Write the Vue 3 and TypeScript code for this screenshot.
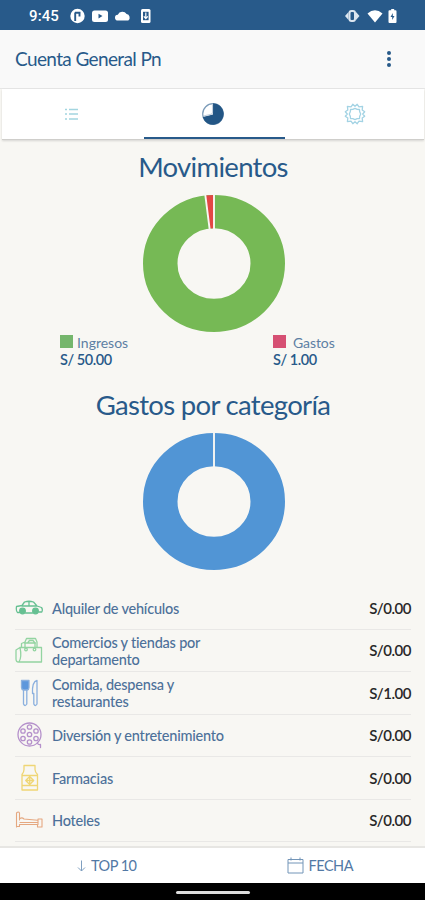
<script setup lang="ts">
interface Category {
  name: string
  amount: string
  icon: string
  color: string
}

const categories: Category[] = [
  { name: 'Alquiler de vehículos', amount: 'S/0.00', icon: 'car', color: '#66c092' },
  { name: 'Comercios y tiendas por departamento', amount: 'S/0.00', icon: 'bag', color: '#93d4a1' },
  { name: 'Comida, despensa y restaurantes', amount: 'S/1.00', icon: 'food', color: '#8bb0de' },
  { name: 'Diversión y entretenimiento', amount: 'S/0.00', icon: 'reel', color: '#b591cb' },
  { name: 'Farmacias', amount: 'S/0.00', icon: 'bottle', color: '#efd675' },
  { name: 'Hoteles', amount: 'S/0.00', icon: 'bed', color: '#e5a880' },
]
</script>

<template>
  <div class="screen">
    <header class="status">
      <span class="clock">9:45</span>
      <svg class="left-icons" viewBox="0 0 84 16" fill="#fff">
        <circle cx="7.500" cy="8" r="7.200" />
        <path d="M5.200 13V4.500M5 4.800h5.500M9.500 4v4.500" stroke="#285a8a" stroke-width="1.900" fill="none" />
        <rect x="22" y="2.500" width="16" height="11.500" rx="2.500" />
        <path d="M28.500 5.800v4.600l4-2.300z" fill="#285a8a" />
        <path d="M48 12.500a2.900 2.900 0 0 1-.2-5.800 5 5 0 0 1 8.800-.6 3.600 3.600 0 0 1 1.700 6.400z" />
        <rect x="71" y="1" width="9.500" height="14" rx="1.500" />
        <path d="M73 3.800h5.600v8.400H73z" fill="#285a8a" />
        <path d="M75.800 4.500v6M73.800 8.300l2 2.200 2-2.200" stroke="#fff" fill="none" stroke-width="1.200" />
      </svg>
      <svg class="right-icons" viewBox="0 0 54 16" fill="#fff">
        <rect x="4.500" y="3" width="5.500" height="10" rx="2" fill="none" stroke="#dce6f0" stroke-width="2" />
        <path d="M3.500 4v8L0 8zM11 4v8l3.500-4z" fill="#dce6f0" />
        <path d="M22.500 5.500q7.500-6.500 15 0L30 14.500z" />
        <path d="M45 2.200h1.200V1h3v1.200h1.300q1 0 1 1V14q0 1-1 1H44.500q-1 0-1-1V3.200q0-1 1-1z" />
        <path d="M47.800 5l-2.300 4h1.700v3l2.300-4h-1.700z" fill="#285a8a" />
      </svg>
    </header>

    <div class="toolbar">
      <h1>Cuenta General Pn</h1>
      <svg class="more" viewBox="0 0 6 18" fill="#285a8a">
        <circle cx="3" cy="3" r="2" /><circle cx="3" cy="9" r="2" /><circle cx="3" cy="15" r="2" />
      </svg>
    </div>

    <nav class="tabs">
      <button class="tab" aria-label="Lista">
        <svg width="16" height="16" viewBox="0 0 16 16" fill="none" stroke="#a3d5e0" stroke-width="1.300">
          <path d="M1 3.500h2M5 3.500h9M1 8h2M5 8h9M1 13h2M5 13h9" />
        </svg>
      </button>
      <button class="tab active" aria-label="Resumen">
        <svg width="24" height="24" viewBox="0 0 24 24">
          <circle cx="12" cy="12" r="10.300" fill="#fff" stroke="#7b9bb8" stroke-width="1.200" />
          <path d="M12 12.500V1.300A10.700 10.700 0 1 1 1.700 15z" fill="#235685" />
          <path d="M11.500 2v8.500q0 1.500-1.500 1.800L2.500 14" stroke="#c3d0dd" stroke-width="1.100" fill="none" />
        </svg>
      </button>
      <button class="tab" aria-label="Ajustes">
        <svg width="22" height="22" viewBox="0 0 22 22" fill="none" stroke="#a3d3e4" stroke-width="1.300" stroke-linejoin="round">
          <path d="M11 3.300 8.800 1.300 7 3.800 3.400 3.400 3.800 7 1.300 8.800 3.300 11 1.300 13.200 3.800 15 3.400 18.600 7 18.200 8.800 20.700 11 18.700 13.200 20.700 15 18.200 18.600 18.600 18.200 15 20.700 13.200 18.700 11 20.700 8.800 18.200 7 18.600 3.400 15 3.800 13.200 1.300z" />
          <path d="M11 5.300 13.200 6.300 15.500 6.500 15.700 8.800 16.700 11 15.700 13.200 15.500 15.500 13.200 15.700 11 16.700 8.800 15.700 6.500 15.500 6.300 13.200 5.300 11 6.300 8.800 6.500 6.500 8.800 6.300z" />
        </svg>
      </button>
    </nav>

    <main>
      <h2 class="moves">Movimientos</h2>
      <svg class="donut" viewBox="0 0 142 142" preserveAspectRatio="none" fill="none">
        <circle cx="71" cy="71" r="53.750" stroke="#76b955" stroke-width="34.500" />
        <circle class="expense" cx="71" cy="71" r="53.750" stroke="#e34744" stroke-width="34.500" pathLength="51" stroke-dasharray="1 50" />
        <path d="M71 0v36M62.300 0l4.400 36" stroke="#f8f7f3" stroke-width="1.900" />
      </svg>
      <div class="legend">
        <div>
          <p class="key"><i class="swatch income" />Ingresos</p>
          <p class="value">S/ 50.00</p>
        </div>
        <div>
          <p class="key wide"><i class="swatch spent" />Gastos</p>
          <p class="value">S/ 1.00</p>
        </div>
      </div>
      <h2 class="by-category">Gastos por categoría</h2>
      <svg class="donut" viewBox="0 0 142 142" preserveAspectRatio="none" fill="none">
        <circle cx="71" cy="71" r="53.750" stroke="#5195d5" stroke-width="34.500" />
        <path d="M71 0v36" stroke="#f8f7f3" stroke-width="1.900" />
      </svg>

      <ul class="list">
        <li v-for="c in categories" :key="c.name">
          <svg class="cat" viewBox="0 0 28 28" fill="none" :stroke="c.color" stroke-width="1.300" stroke-linejoin="round" stroke-linecap="round">
            <g v-if="c.icon === 'car'">
              <path d="M4.500 18.500H2.500Q.8 17 1.500 12.500L7 11.500l2.500-3.500q4.500-1.500 9 0l3.500 4 4.500 1.500q1.500 2 .3 4.500h-3M10.500 19h7M7 12h15M14 7.500V12" />
              <circle cx="7.500" cy="17" r="2.800" :fill="c.color" /><circle cx="20.500" cy="17" r="2.800" :fill="c.color" />
            </g>
            <g v-else-if="c.icon === 'bag'">
              <path d="M5 11.500h21.500V26H3.500Q1 26 1 23V14zM5 11.500Q7 21 4 26M6.500 11.500V7.500L10 6l1.500-3.500h9L22 6v5.500M9.500 7h11M10 7v5M20 7v5M12.500 7l2-2.500h3.500l2 2.500" />
              <circle cx="11" cy="13.500" r="1.300" /><circle cx="19.500" cy="13.500" r="1.300" />
            </g>
            <g v-else-if="c.icon === 'food'">
              <path d="M6.500 1.500h7.500v7q0 2-2 2.500H8.500q-2-.5-2-2.500z" fill="#5d97dc" />
              <path d="M8.500 11v14q1.500 3 3.300 0V11M22 1.500q-5 1-4.500 13h1.300V25q1.500 3 3.200 0z" />
            </g>
            <g v-else-if="c.icon === 'reel'">
              <circle cx="14.500" cy="13.500" r="11.500" /><circle cx="14.500" cy="13.500" r="2.200" />
              <circle cx="14.500" cy="6" r="2.200" /><circle cx="21" cy="10" r="2.200" /><circle cx="21" cy="17.500" r="2.200" />
              <circle cx="14.500" cy="21" r="2.200" /><circle cx="8" cy="17.500" r="2.200" /><circle cx="8" cy="10" r="2.200" />
              <path d="M22.500 21.500q0 2.500 3 2v3" />
            </g>
            <g v-else-if="c.icon === 'bottle'">
              <path d="M9 1.500h11v4M9 1.500v4Q9 8 7 10.500V26h15.500V10.500q-2.500-2.500-2.500-5M7 11.500h15.500M7 21.500h15.500" />
              <path d="M14.700 14v5M12.200 16.500h5M14.700 12.500l4 4-4 4-4-4z" />
            </g>
            <g v-else stroke-width="1.100">
              <path d="M1.500 21V7q2-2 3 0v7M1.500 20.500h3V18.500h18v2.500h4.500V13h-4v5.500M5 12.500q2-1.500 4 .5l13.500 1.200M5 16.500h18" />
            </g>
          </svg>
          <span class="name">{{ c.name }}</span>
          <span class="amount">{{ c.amount }}</span>
        </li>
      </ul>
    </main>

    <footer class="actions">
      <button class="top">
        <svg width="9" height="12" viewBox="0 0 9 12" fill="none" stroke="#7f9fc0"><path d="M4.500.5v10.500M1 7.500l3.500 3.500L8 7.500" /></svg>
        TOP 10
      </button>
      <button class="date">
        <svg width="17" height="17" viewBox="0 0 17 17" fill="none" stroke="#7395b8"><path d="M1 2.500h15v13.500H1zM1 6h15M4 .5v3M13 .5v3" /></svg>
        FECHA
      </button>
    </footer>
    <div class="gesture"><span /></div>
  </div>
</template>

<style>
body { margin: 0; }
</style>

<style scoped>
* { box-sizing: border-box; }
.screen { width: 100%; height: 900px; display: flex; flex-direction: column; background: #f8f7f3; font-family: Lato, "Noto Sans", sans-serif; font-variant-ligatures: none; color: #285a8a; overflow: hidden; }
h1, h2, p, ul { margin: 0; padding: 0; font-weight: 400; }
button { border: 0; background: none; padding: 0; font: inherit; letter-spacing: inherit; color: inherit; display: flex; align-items: center; justify-content: center; }
.status { height: 30px; flex: none; background: #285a8a; display: flex; align-items: center; padding: 2px 26px 0 29px; }
.clock { font: 500 15px/16px Roboto, sans-serif; color: #fff; width: 41px; letter-spacing: .1px; }
.left-icons { width: 84px; height: 16px; }
.right-icons { width: 54px; height: 16px; margin-left: auto; }
.toolbar { height: 59px; flex: none; background: #f9f9f9; display: flex; align-items: center; justify-content: space-between; padding: 0 33px 0 15px; border-bottom: 1px solid #e6e6e6; }
h1 { font-size: 19px; line-height: 24px; letter-spacing: -.62px; white-space: nowrap; }
.more { width: 6px; height: 18px; }
.tabs { height: 51px; flex: none; display: grid; grid-template-columns: 142px 141px 1fr; margin: 0 1px 0 2px; background: #fff; border-bottom: 1px solid #cfcecb; box-shadow: 0 1px 2px #0002; }
.tab { padding-top: 1px; border-bottom: 2px solid transparent; }
.tab.active { border-color: #285a8a; padding-right: 3px; }
.tab:first-child { padding-right: 2px; }
main { flex: 1; min-height: 0; overflow: hidden; display: flex; flex-direction: column; align-items: center; border-bottom: 2px solid #e7e6e3; }
h2 { font-size: 27.500px; line-height: 36px; white-space: nowrap; }
.moves { margin: 9px 0 0 1px; letter-spacing: -.7px; }
.donut { display: block; width: 142px; height: 137px; flex: none; margin: 9.500px 0 0 2px; }
.expense { transform: rotate(-97.060deg); transform-origin: 71px 71px; }
.legend { align-self: stretch; display: grid; grid-template-columns: 213px 1fr; padding-left: 60px; margin-top: 2px; }
.key { display: flex; align-items: center; gap: 4px; font-size: 14px; line-height: 17px; color: #5d7fa3; }
.key.wide { gap: 7px; letter-spacing: -.1px; }
.value { font-size: 14.500px; line-height: 17px; font-weight: 600; letter-spacing: -.45px; }
.swatch { width: 13px; height: 13px; margin-top: -2px; }
.income { background: #75b66c; }
.spent { background: #d65073; }
.by-category { margin: 19.500px 0 0 1px; letter-spacing: -.68px; }
.list { list-style: none; align-self: stretch; margin: 17.500px 14px 0 15px; }
li { height: 42.500px; display: flex; flex: none; align-items: center; border-bottom: 1px solid #e9e8e6; }
.cat { width: 28px; height: 28px; flex: none; }
.name { width: 180px; margin-left: 9px; padding-top: 1px; font-size: 14.500px; line-height: 17px; letter-spacing: -.22px; font-weight: 500; color: #4d719a; }
.amount { margin-left: auto; font-size: 15px; font-weight: 600; letter-spacing: -.48px; color: #282828; }
.actions { height: 35px; flex: none; background: #fff; display: grid; grid-template-columns: 1fr 1fr; font-size: 14.500px; letter-spacing: -.5px; color: #5279a5; }
.actions button { gap: 5px; }
.actions .top { padding-left: 1px; }
.actions .date { padding-left: 2px; }
.gesture { height: 17px; flex: none; background: #000; display: flex; align-items: center; justify-content: center; }
.gesture span { width: 74px; height: 3px; border-radius: 2px; background: #ddd; margin-top: 1px; }
</style>
